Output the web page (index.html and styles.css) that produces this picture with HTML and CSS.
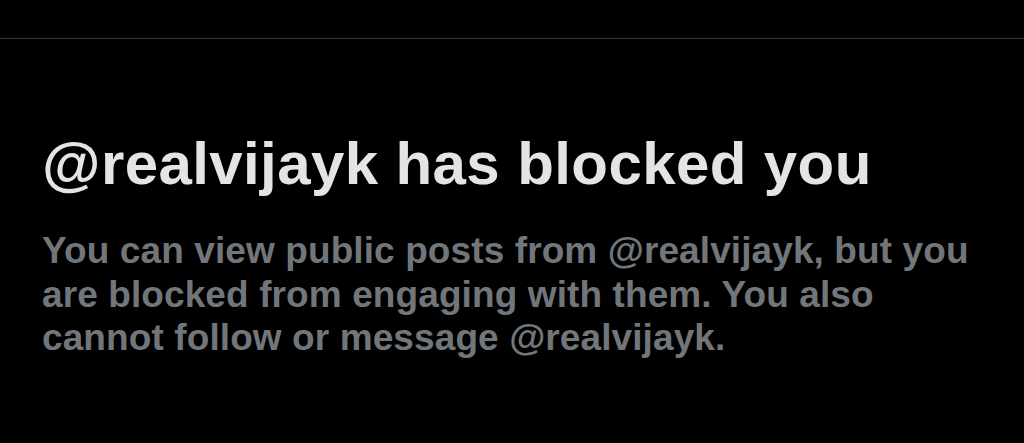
FILE: index.html
```html
<!DOCTYPE html>
<html lang="en">
<head>
<meta charset="utf-8">
<title>Blocked</title>
<link rel="stylesheet" href="styles.css">
</head>
<body>
<div class="page">
  <div class="topbar"></div>
  <main class="notice">
    <h1 class="notice-title">@realvijayk has blocked you</h1>
    <p class="notice-text">You can view public posts from @realvijayk, but you are blocked from engaging with them. You also cannot follow or message @realvijayk.</p>
  </main>
</div>
</body>
</html>
```

FILE: styles.css
```css
html, body {
  margin: 0;
  padding: 0;
  background: #000;
}
.page {
  width: 1024px;
  height: 443px;
  overflow: hidden;
  background: #000;
  font-family: "Liberation Sans", Arial, sans-serif;
}
.topbar {
  height: 38px;
  border-bottom: 1px solid #2f3336;
}
.notice {
  padding: 91px 30px 0 42px;
}
.notice-title {
  margin: 0;
  color: #e2e4e5;
  font-size: 60px;
  font-weight: 700;
  line-height: 68px;
  letter-spacing: 0.4px;
  white-space: nowrap;
}
.notice-text {
  margin: 31px 0 0;
  max-width: 940px;
  color: #71767b;
  font-size: 37px;
  font-weight: 700;
  line-height: 43.5px;
  letter-spacing: 0.1px;
}
```
